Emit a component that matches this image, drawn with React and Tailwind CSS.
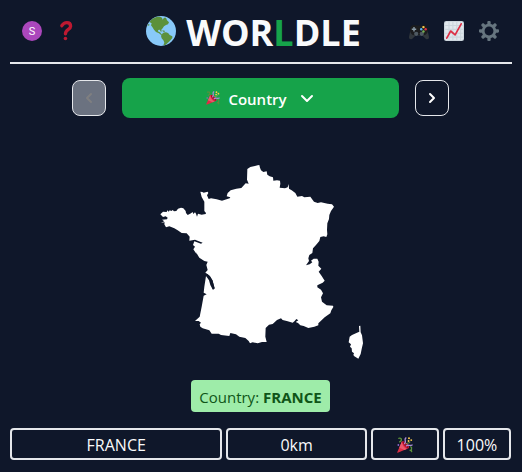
import React from "react";

function Globe() {
  return (
    <svg viewBox="0 0 90 90" className="size-[30px] shrink-0" aria-hidden="true">
      <circle cx="45" cy="45" r="45" fill="#88c9f9" />
      <path
        fill="#5c913b"
        d="M10 18C17 9 25 4 34 2L42 2 48 5 50 11 54 5 60 5 63 13 69 19 66 25 60 27 54 31 50 37 46 41 47 47 43 46 42 41 36 42 37 47 42 49 46 54 49 57 46 58 39 52 30 48 24 41 19 33 15 28 17 22ZM50 52C55 47 62 48 67 52L71 57 79 61 79 66 74 72 69 77 64 82 58 87 52 88 55 80 53 74 47 67 45 60Z"
      />
      <path fill="#5c913b" d="M49 43L56 44 57 47 51 47ZM4 31L8 23 11 27Z" />
    </svg>
  );
}

function QuestionMark() {
  return (
    <svg viewBox="0 0 36 36" className="size-5" aria-hidden="true">
      <path d="M10.5 8.500C13 4.500 16.500 3 19.500 3C24 3 26.300 6 26.300 9.500C26.300 15.500 17 14.500 17 23" fill="none" stroke="#be1931" strokeWidth="6" strokeLinecap="round" />
      <circle cx="17" cy="31.500" r="3.200" fill="#be1931" />
    </svg>
  );
}

function Controller() {
  return (
    <svg viewBox="0 0 36 36" className="size-5" aria-hidden="true">
      <path fill="#31373d" d="M3 15L0 29C0 33 3 34 6 32L12 26H24L30 32C33 34 36 33 36 29L33 15Z" />
      <path fill="#1b1c1e" d="M2 18C1 11 4 7 10 7L13 8H23L26 7C32 7 35 11 34 18C33 24 28 27 24 25H12C8 27 3 24 2 18Z" />
      <circle cx="13" cy="23" r="3.800" fill="#4f5a63" />
      <circle cx="23" cy="23" r="3.800" fill="#4f5a63" />
      <path d="M9 11V19M5 15H13" stroke="#8899a6" strokeWidth="2.600" />
      <circle cx="26" cy="11" r="2.200" fill="#ffcc4d" />
      <circle cx="22" cy="15" r="2.200" fill="#55acee" />
      <circle cx="30" cy="15" r="2.200" fill="#dd2e44" />
      <circle cx="26" cy="19" r="2.200" fill="#77b255" />
    </svg>
  );
}

function ChartIcon() {
  return (
    <svg viewBox="0 0 36 36" className="size-5" aria-hidden="true">
      <rect width="36" height="36" rx="4" fill="#ccd6dd" />
      <rect x="2" y="2" width="32" height="32" rx="2" fill="#e1e8ed" />
      <path d="M9 2V34M16 2V34M23 2V34M30 2V34M2 8H34M2 15H34M2 22H34M2 29H34" stroke="#ccd6dd" strokeWidth="2" />
      <path d="M5 31L12 18L20 25L31 5" fill="none" stroke="#dd2e44" strokeWidth="3" strokeLinecap="round" strokeLinejoin="round" />
    </svg>
  );
}

function Gear() {
  return (
    <svg viewBox="0 0 36 36" className="size-5" aria-hidden="true">
      <path
        fill="#66757f"
        d="M34 15h-3.362c-.324-1.369-.864-2.651-1.582-3.814l2.379-2.379c.781-.781.781-2.048 0-2.829l-1.414-1.414c-.781-.781-2.047-.781-2.828 0l-2.379 2.379C23.650 6.225 22.369 5.686 21 5.362V2c0-1.104-.896-2-2-2h-2c-1.104 0-2 .896-2 2v3.362c-1.369.324-2.651.864-3.814 1.582L8.808 4.565c-.781-.781-2.048-.781-2.828 0L4.565 5.979c-.781.781-.781 2.048-.001 2.829l2.379 2.379C6.225 12.350 5.686 13.632 5.362 15H2c-1.104 0-2 .896-2 2v2c0 1.104.896 2 2 2h3.362c.324 1.368.864 2.650 1.582 3.813l-2.379 2.379c-.780.780-.780 2.048.001 2.829l1.414 1.414c.780.780 2.047.780 2.828 0l2.379-2.379c1.163.719 2.445 1.258 3.814 1.582V34c0 1.104.896 2 2 2h2c1.104 0 2-.896 2-2v-3.362c1.368-.324 2.650-.864 3.813-1.582l2.379 2.379c.781.781 2.047.781 2.828 0l1.414-1.414c.781-.781.781-2.048 0-2.829l-2.379-2.379c.719-1.163 1.258-2.445 1.582-3.814H34c1.104 0 2-.896 2-2v-2C36 15.896 35.104 15 34 15zM18 26c-4.418 0-8-3.582-8-8s3.582-8 8-8 8 3.582 8 8-3.582 8-8 8z"
      />
    </svg>
  );
}

function PartyPopper({ className }) {
  return (
    <svg viewBox="0 0 36 36" className={className} role="img" aria-label="Party popper">
      <path fill="#dd2e44" d="M11 10L1 33C0 35 1 36 3 35L27 25C28 18 18 8 11 10Z" />
      <path fill="#ea596e" d="M11 10L5 24L17 29L22 27C14 23 11 16 11 10Z" />
      <path fill="#a0041e" d="M12 10C18 10 26 18 26 25C20 24 13 17 12 10Z" />
      <path d="M20 2C15 6 22 9 17 15M21 20C25 16 29 21 34 18" fill="none" stroke="#aa8dd8" strokeWidth="3" strokeLinecap="round" />
      <path d="M4 3C11 1 12 8 6 11M31 22C36 24 30 28 33 33" fill="none" stroke="#5c913b" strokeWidth="3" strokeLinecap="round" />
      <path d="M20 16C24 12 28 15 30 11" fill="none" stroke="#77b255" strokeWidth="2" />
      <circle cx="27" cy="3" r="2.200" fill="#ffcc4d" />
      <circle cx="32" cy="7" r="2.200" fill="#ffcc4d" />
      <circle cx="26" cy="9" r="2.200" fill="#ffcc4d" />
      <circle cx="3" cy="18" r="2" fill="#9266cc" />
      <circle cx="30" cy="30" r="2" fill="#5c913b" />
    </svg>
  );
}

function CountryShape() {
  return (
    <svg viewBox="0 0 660 630" className="mx-auto h-[210px] w-[220px]" role="img" aria-label="Country outline">
      <path
        fill="#fff"
        d="M28 178L36 170 47 171 49 166 53 170 57 165 60 169 65 165 69 169 76 168 81 161 90 158 97 160 104 168 105 174 110 180 120 175 125 171 127 177 132 172 135 176 138 185 141 176 152 179 164 177 165 174 160 168 160 140 152 126 148 110 154 111 158 113 170 110 172 114 168 121 173 132 180 130 197 133 213 137 236 130 238 127 227 124 230 114 239 106 256 101 271 99 284 85 293 86 288 74 289 42 298 36 320 31 325 30 327 38 330 46 337 51 347 49 349 59 356 64 366 67 367 77 378 76 387 77 388 86 386 98 402 100 410 97 413 87 414 101 422 106 433 114 439 125 453 123 460 127 478 125 489 140 500 144 510 142 530 146 543 148 549 155 540 168 535 180 534 192 529 205 528 225 529 238 526 246 518 244 508 246 505 258 495 270 486 280 484 294 475 300 472 310 474 318 465 331 476 328 484 322 480 317 488 311 499 311 503 320 502 332 511 341 503 350 512 363 521 377 515 383 499 391 499 397 510 404 516 415 510 427 513 440 527 451 546 452 547 456 541 466 538 475 521 487 510 497 502 505 502 511 490 515 472 519 458 513 448 511 441 504 434 501 442 496 436 492 431 498 425 503 410 499 395 495 390 490 378 495 365 507 354 509 344 519 343 545 347 561 333 561 320 565 305 562 297 565 293 558 283 549 265 545 255 538 238 534 235 543 210 540 203 536 182 536 175 526 155 520 148 515 146 508 150 503 143 498 132 498 146 485 152 455 158 422 167 418 158 413 160 395 165 363 174 376 178 390 186 405 191 400 184 376 174 361 163 353 170 345 166 330 170 320 160 318 145 308 135 292 137 298 127 283 132 275 126 270 130 259 150 266 155 263 132 254 115 257 116 245 107 235 92 234 80 226 70 220 55 214 45 217 40 208 41 202 30 203 40 199 33 194 48 193 50 188 44 184 36 186Z"
      />
      <path d="M165 358L175 366 182 378 188 401" fill="none" stroke="#0f172a" strokeWidth="6" />
      <path
        fill="#fff"
        d="M624 513L628 512 629 532 633 541 636 565 632 582 629 597 622 611 610 604 607 600 609 595 603 590 602 580 597 575 600 568 593 562 596 545 603 540 618 533 625 530Z"
      />
    </svg>
  );
}

function Chevron({ points, className }) {
  return (
    <svg viewBox="0 0 16 16" className={className} fill="none" stroke="currentColor" strokeWidth="2" aria-hidden="true">
      <polyline points={points} strokeLinecap="round" strokeLinejoin="round" />
    </svg>
  );
}

export default function App() {
  const cell = "flex h-8 items-center justify-center rounded border-2 border-gray-200 pt-px";
  return (
    <div className="min-h-screen bg-[#0f172a] px-[10px] font-['Segoe_UI','Open_Sans','Noto_Sans',sans-serif] text-base text-gray-50">
      <header className="flex h-16 items-center justify-between border-b-2 border-gray-200 pr-[13px] pl-3">
        <div className="flex w-[76px] items-center gap-[14px]">
          <button aria-label="Account" className="flex size-5 items-center justify-center rounded-full bg-[#ab47bc] font-[Roboto,sans-serif] text-[11px] leading-none text-white">
            S
          </button>
          <button aria-label="Help"><QuestionMark /></button>
        </div>
        <h1 className="flex items-center gap-[10px] text-4xl font-bold">
          <Globe />
          <span className="pt-1">WOR<span className="text-[#16a34a]">L</span>DLE</span>
        </h1>
        <div className="flex w-[90px] items-center justify-end gap-[15px]">
          <button aria-label="Other games"><Controller /></button>
          <button aria-label="Statistics"><ChartIcon /></button>
          <button aria-label="Settings"><Gear /></button>
        </div>
      </header>

      <main className="pr-px">
        <nav className="flex items-center justify-center gap-4 pt-[14px]">
          <button disabled aria-label="Previous round" className="flex h-9 w-[34px] items-center justify-center rounded-lg border border-gray-200 bg-[#6b7280] text-[#7f7f80]">
            <Chevron points="10,4 6,8 10,12" className="size-4" />
          </button>
          <button className="flex h-10 w-[277px] items-center justify-center rounded-lg bg-[#16a34a] text-[15px] font-semibold text-white">
            <PartyPopper className="mr-2 size-[14px]" />
            <span className="pt-[2px]">Country</span>
            <Chevron points="3,6 8,11 13,6" className="ml-3 size-4" />
          </button>
          <button aria-label="Next round" className="flex h-9 w-[34px] items-center justify-center rounded-lg border border-gray-200 text-white">
            <Chevron points="6,4 10,8 6,12" className="size-4" />
          </button>
        </nav>

        <div className="pt-[37px]">
          <CountryShape />
        </div>

        <p className="mx-auto mt-[15px] flex h-8 w-fit items-center gap-1 rounded bg-[#9eeca9] px-2 pt-[2px] text-[15px] text-[#0f5518]">
          Country: <strong className="font-bold">FRANCE</strong>
        </p>

        <div className="mt-4 grid grid-cols-7 gap-1">
          <div className={`${cell} col-span-3`}>FRANCE</div>
          <div className={`${cell} col-span-2`}>0km</div>
          <div className={cell}><PartyPopper className="size-4" /></div>
          <div className={cell}>100%</div>
        </div>
      </main>
    </div>
  );
}
